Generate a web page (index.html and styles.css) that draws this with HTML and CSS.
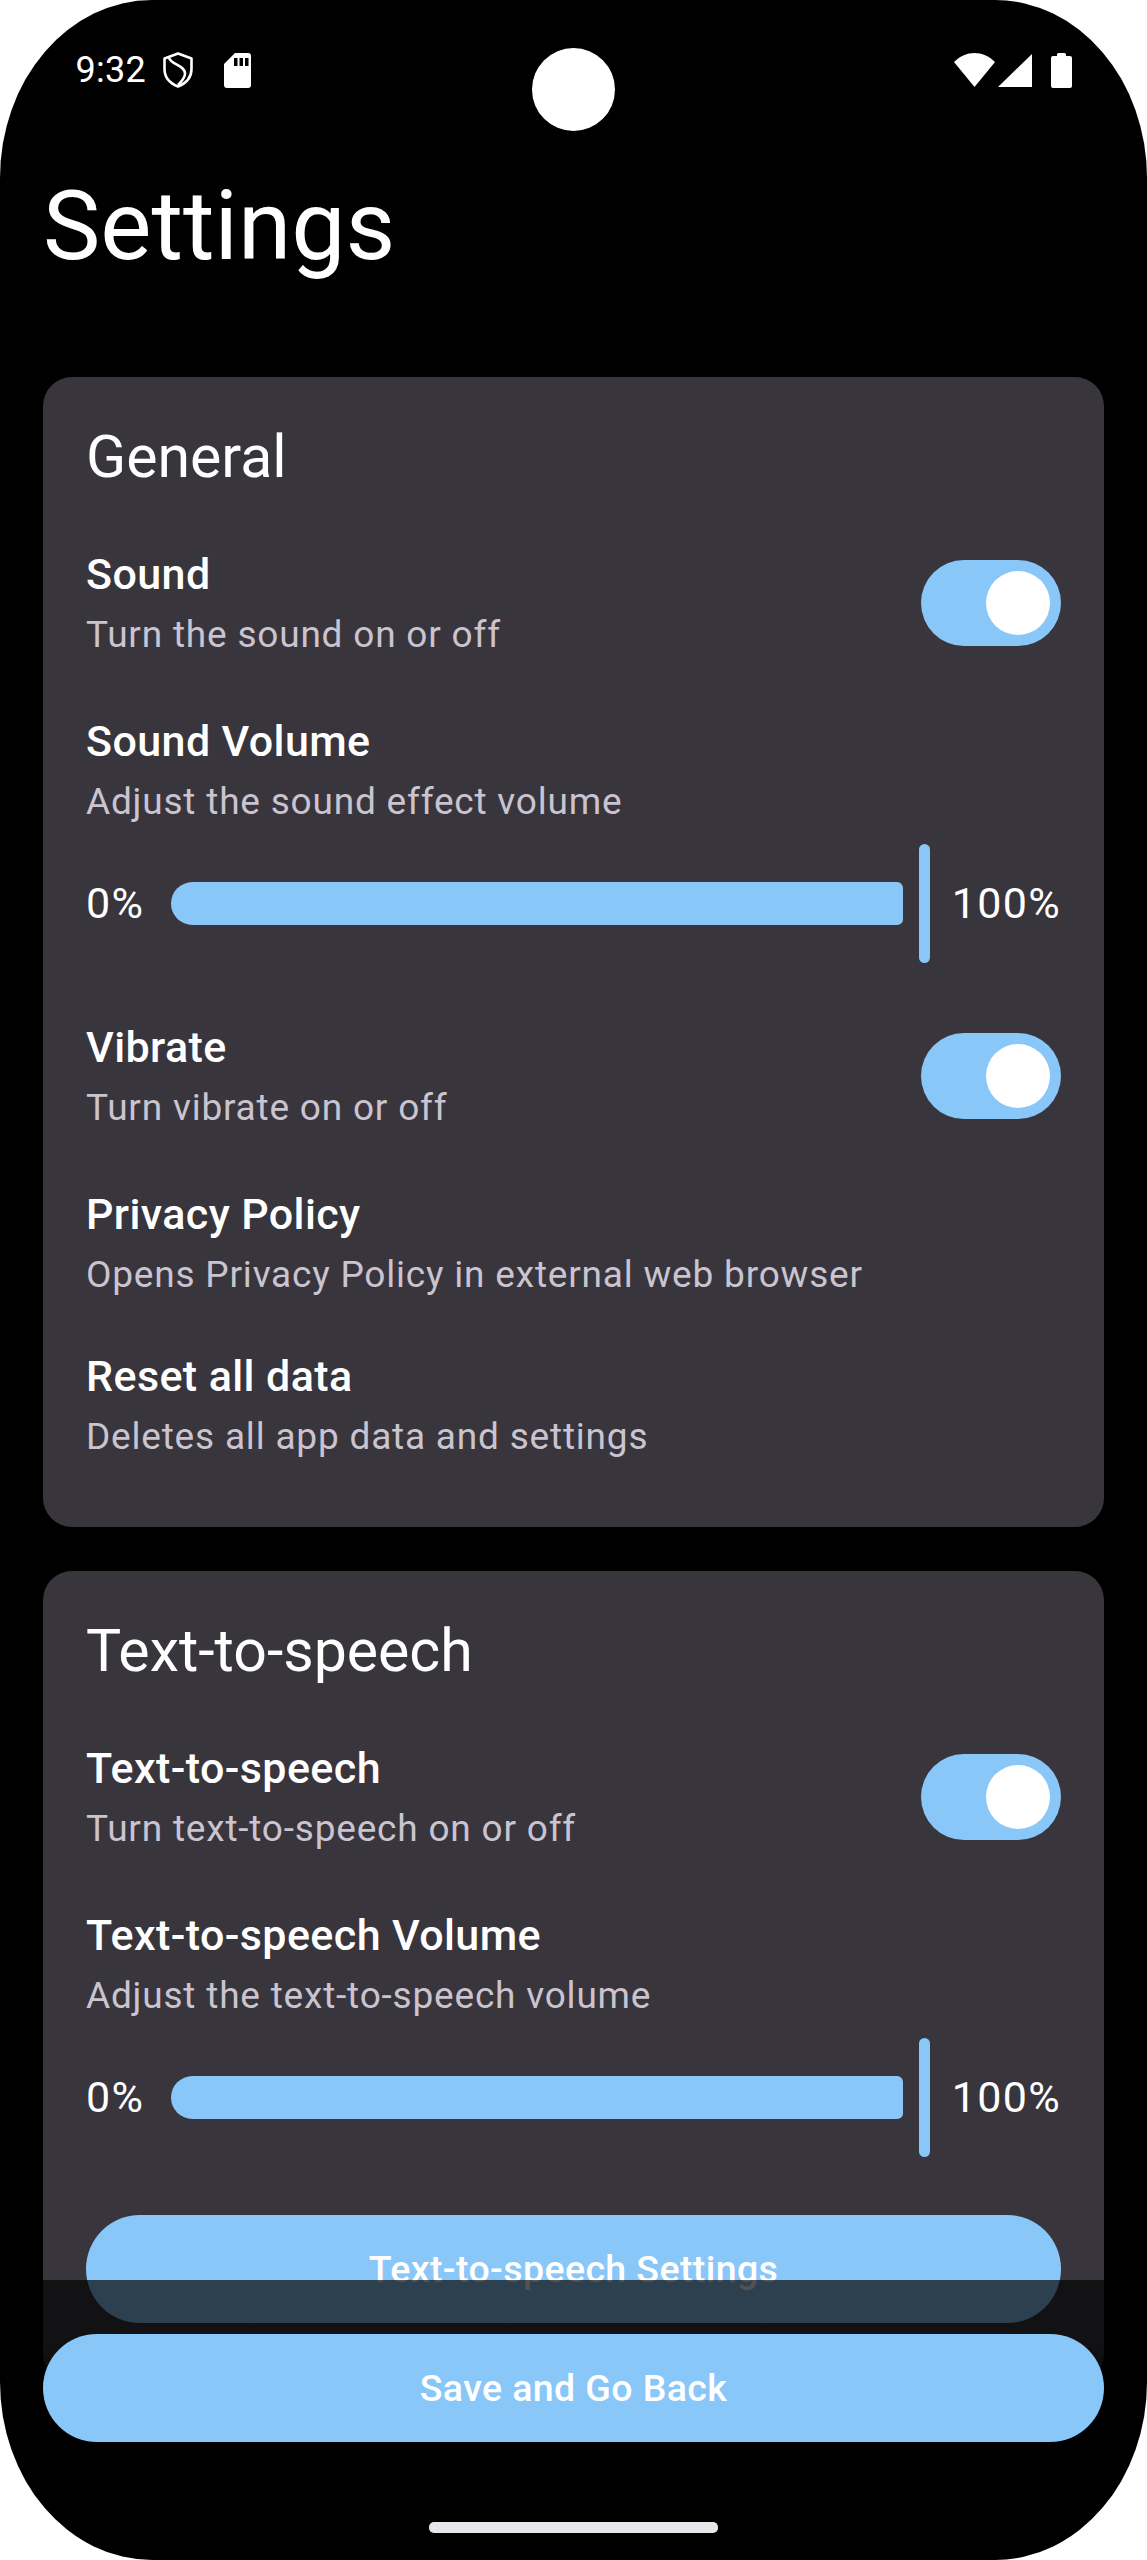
FILE: index.html
```html
<!DOCTYPE html>
<html lang="en">
<head>
    <meta charset="UTF-8">
    <meta name="viewport" content="width=device-width, initial-scale=1.0">
    <title>Settings</title>
    <link rel="stylesheet" href="styles.css">
</head>
<body>
    <div class="screen">
        <div class="status-bar">
            <div class="status-left">
                <span class="clock">9:32</span>
                <svg class="icon-shield" viewBox="0 0 30 36" width="30" height="36">
                    <path d="M15 1.5 L28.5 6.5 V17 C28.5 25.5 22.5 31.5 15 34.5 C7.5 31.5 1.5 25.5 1.5 17 V6.5 Z" fill="none" stroke="#fff" stroke-width="2.6" stroke-linejoin="round"/>
                    <path d="M6 6 C9 13 21 13 22 21 C22.5 26 18.5 29 15 33" fill="none" stroke="#fff" stroke-width="2.6"/>
                </svg>
                <svg class="icon-sd" viewBox="0 0 27 35" width="27" height="35">
                    <path d="M11 0 H24 A3 3 0 0 1 27 3 V32 A3 3 0 0 1 24 35 H3 A3 3 0 0 1 0 32 V11 Z" fill="#fff"/>
                    <rect x="10" y="5" width="3.5" height="8" fill="#000"/>
                    <rect x="15.5" y="5" width="3.5" height="8" fill="#000"/>
                    <rect x="21" y="5" width="3.5" height="8" fill="#000"/>
                </svg>
            </div>
            <div class="status-right">
                <svg viewBox="0 0 41 34" width="41" height="34">
                    <path d="M0 9 C12 -3 29 -3 41 9 L20.5 34 Z" fill="#fff"/>
                </svg>
                <svg class="icon-signal" viewBox="0 0 34 33" width="34" height="33">
                    <path d="M34 0 V33 H0 Z" fill="#fff"/>
                </svg>
                <svg class="icon-battery" viewBox="0 0 21 35" width="21" height="35">
                    <path d="M6 3 V1.5 A1.5 1.5 0 0 1 7.5 0 H13.5 A1.5 1.5 0 0 1 15 1.5 V3 H19 A2 2 0 0 1 21 5 V33 A2 2 0 0 1 19 35 H2 A2 2 0 0 1 0 33 V5 A2 2 0 0 1 2 3 Z" fill="#fff"/>
                </svg>
            </div>
        </div>

        <h1 class="page-title">Settings</h1>

        <div class="card">
            <h2>General</h2>
            <div class="setting setting-toggle">
                <div>
                    <div class="setting-title">Sound</div>
                    <div class="setting-desc">Turn the sound on or off</div>
                </div>
                <div class="switch"><div class="switch-thumb"></div></div>
            </div>
            <div class="setting">
                <div class="setting-title">Sound Volume</div>
                <div class="setting-desc">Adjust the sound effect volume</div>
            </div>
            <div class="slider">
                <span class="slider-min">0%</span>
                <div class="slider-track"></div>
                <div class="slider-handle"></div>
                <span class="slider-max">100%</span>
            </div>
            <div class="setting setting-toggle after-slider">
                <div>
                    <div class="setting-title">Vibrate</div>
                    <div class="setting-desc">Turn vibrate on or off</div>
                </div>
                <div class="switch"><div class="switch-thumb"></div></div>
            </div>
            <div class="setting">
                <div class="setting-title">Privacy Policy</div>
                <div class="setting-desc">Opens Privacy Policy in external web browser</div>
            </div>
            <div class="setting setting-last">
                <div class="setting-title">Reset all data</div>
                <div class="setting-desc">Deletes all app data and settings</div>
            </div>
        </div>

        <div class="card">
            <h2>Text-to-speech</h2>
            <div class="setting setting-toggle">
                <div>
                    <div class="setting-title">Text-to-speech</div>
                    <div class="setting-desc">Turn text-to-speech on or off</div>
                </div>
                <div class="switch"><div class="switch-thumb"></div></div>
            </div>
            <div class="setting">
                <div class="setting-title">Text-to-speech Volume</div>
                <div class="setting-desc">Adjust the text-to-speech volume</div>
            </div>
            <div class="slider">
                <span class="slider-min">0%</span>
                <div class="slider-track"></div>
                <div class="slider-handle"></div>
                <span class="slider-max">100%</span>
            </div>
            <button class="btn btn-inner">Text-to-speech Settings</button>
        </div>

        <div class="camera"></div>

        <div class="bottom-bar">
            <button class="btn">Save and Go Back</button>
            <div class="nav-handle"></div>
        </div>
    </div>
</body>
</html>
```

FILE: styles.css
```css
body {
    margin: 0;
    background-color: #fff;
    font-family: Roboto, "Liberation Sans", sans-serif;
    color: #fff;
}
.screen {
    position: relative;
    box-sizing: border-box;
    width: 1147px;
    height: 2560px;
    padding: 0 43px;
    overflow: hidden;
    background-color: #000;
    border-radius: 152px / 178px;
}
.status-bar {
    display: flex;
    justify-content: space-between;
    align-items: center;
    height: 36px;
    padding: 52px 32px 0 32.5px;
}
.status-left, .status-right {
    display: flex;
    align-items: center;
}
.clock {
    font-size: 36px;
    line-height: 36px;
    letter-spacing: 0.3px;
    margin-right: 17px;
}
.icon-sd {
    margin-left: 31px;
}
.icon-signal {
    margin-left: 3px;
}
.icon-battery {
    margin-left: 19px;
}
.camera {
    position: absolute;
    top: 48px;
    left: 532px;
    width: 83px;
    height: 83px;
    border-radius: 50%;
    background-color: #fff;
}
.page-title {
    margin: 82px 0 0 0;
    height: 207px;
    font-size: 96.5px;
    line-height: 112px;
    font-weight: 400;
}
.card {
    box-sizing: border-box;
    padding: 40px 43px 60px;
    margin-bottom: 44px;
    background-color: #38353d;
    border-radius: 29px;
}
.card h2 {
    margin: 0 0 48px;
    font-size: 59px;
    line-height: 80px;
    font-weight: 400;
}
.setting {
    margin-bottom: 47px;
}
.setting-toggle {
    display: flex;
    justify-content: space-between;
    align-items: center;
}
.after-slider {
    margin-top: 55px;
}
.setting-last {
    margin-top: -5px;
    margin-bottom: 0;
}
.setting-title {
    font-size: 43px;
    line-height: 58px;
    font-weight: 500;
    letter-spacing: 0.4px;
}
.setting-desc {
    margin-top: 2px;
    font-size: 37px;
    line-height: 60px;
    letter-spacing: 0.8px;
    color: #cac4d0;
}
.switch {
    box-sizing: border-box;
    display: flex;
    justify-content: flex-end;
    align-items: center;
    width: 140px;
    height: 86px;
    padding-right: 11px;
    margin-top: -5px;
    border-radius: 43px;
    background-color: #8ac7f9;
}
.switch-thumb {
    width: 64px;
    height: 64px;
    border-radius: 50%;
    background-color: #fff;
}
.setting + .slider {
    margin-top: -35px;
}
.slider {
    display: flex;
    align-items: center;
    height: 119px;
    font-size: 43px;
    letter-spacing: 1.3px;
}
.slider-min {
    width: 85px;
    padding-bottom: 2px;
}
.slider-track {
    flex: 1;
    height: 43px;
    border-radius: 22px 6px 6px 22px;
    background-color: #8ac7f9;
}
.slider-handle {
    width: 11px;
    height: 119px;
    margin-left: 16px;
    border-radius: 6px;
    background-color: #8ac7f9;
}
.slider-max {
    width: 131px;
    padding-bottom: 2px;
    text-align: right;
}
.btn {
    display: block;
    position: relative;
    width: 100%;
    height: 108px;
    border: none;
    border-radius: 54px;
    background-color: #8ac7f9;
    color: #fff;
    font-family: inherit;
    font-size: 37.5px;
    font-weight: 500;
    letter-spacing: 0.4px;
}
.btn-inner {
    margin-top: 58px;
}
.bottom-bar {
    position: absolute;
    left: 43px;
    right: 43px;
    top: 2280px;
    height: 280px;
    padding-top: 54px;
    box-sizing: border-box;
}
.bottom-bar::before {
    content: "";
    position: absolute;
    top: 0;
    left: 0;
    right: 0;
    height: 160px;
    background: linear-gradient(rgba(0, 0, 0, 0.68) 40%, #000);
}
.nav-handle {
    position: relative;
    width: 289px;
    height: 11px;
    margin: 80px auto 0;
    border-radius: 5px;
    background-color: #e8e6ea;
}
```
